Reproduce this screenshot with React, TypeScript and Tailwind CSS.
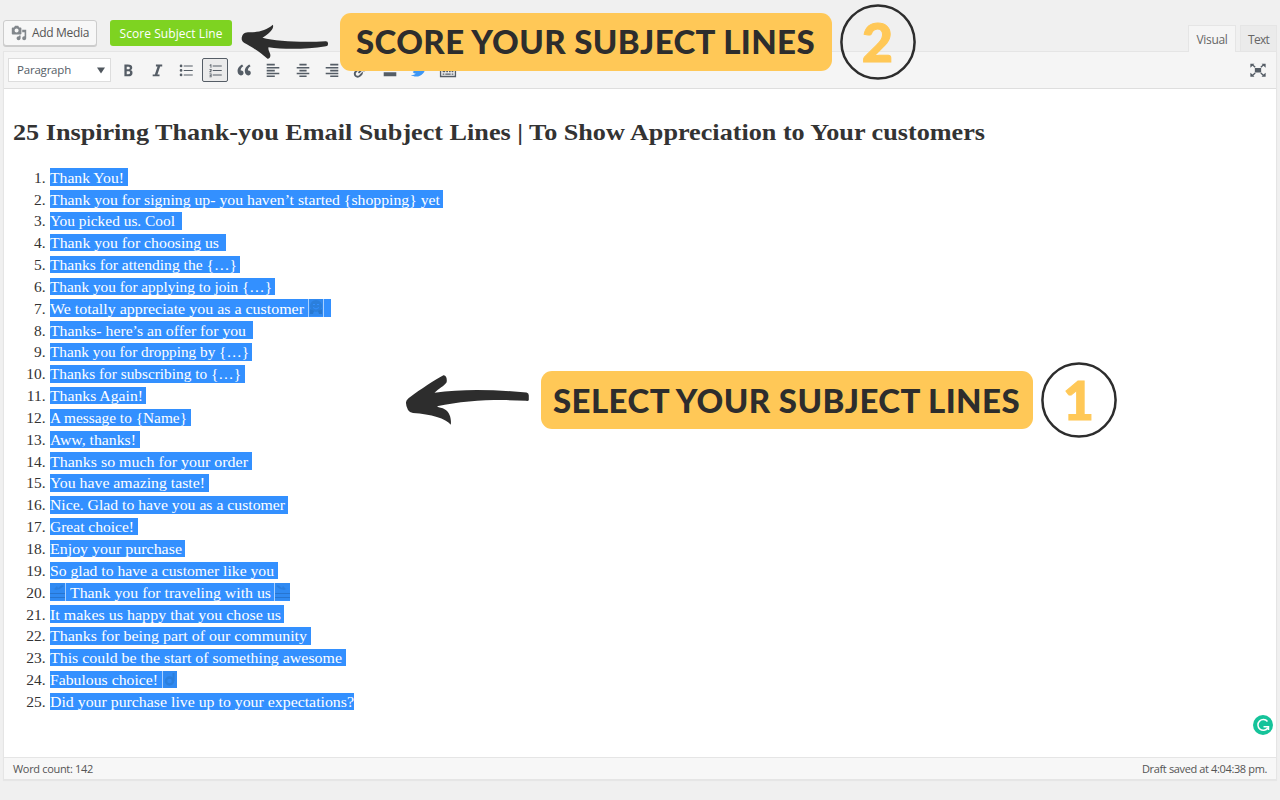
import { useLayoutEffect, useRef, type ReactNode } from "react";

/** Text that fills exactly `width` pixels, by tracking or by stretching its glyphs. */
function Fit({
  width,
  children,
  className = "",
  stretch = false,
}: {
  width: number;
  children: string;
  className?: string;
  stretch?: boolean;
}) {
  const ref = useRef<HTMLSpanElement>(null);
  useLayoutEffect(() => {
    const el = ref.current;
    if (!el) return;
    el.style.letterSpacing = "0px";
    el.style.transform = "none";
    el.style.width = "auto";
    const natural = el.getBoundingClientRect().width;
    if (stretch) {
      el.style.width = `${width}px`;
      el.style.transform = `scaleX(${width / natural})`;
    } else {
      el.style.letterSpacing = `${(width - natural) / children.length}px`;
    }
  }, [width, children, stretch]);
  return (
    <span ref={ref} className={`inline-block origin-left whitespace-pre ${className}`}>
      {children}
    </span>
  );
}

type Line = { text: string; w: number; hl: number; before?: ReactNode; after?: ReactNode };

const Hug = () => (
  <span className="flex h-full">
    <span className="ml-1 w-px bg-[#a9d0ff]" />
    <svg width="14" height="17" viewBox="0 0 14 17" className="bg-[#3089ef]">
      <circle cx="7" cy="7" r="6" fill="#2b7fdc" />
      <path d="M4 5.5h2M8 5.5h2M4 8.5q3 3 6 0" stroke="#3390ff" fill="none" />
      <path d="M1 10l4 2-1 3H1zM13 10l-4 2 1 3h3z" fill="#2878cf" />
    </svg>
    <span className="w-px bg-[#a9d0ff]" />
  </span>
);

const Plane = ({ flip = false }: { flip?: boolean }) => (
  <svg width="15" height="17" viewBox="0 0 15 17" className={flip ? "-scale-x-100" : ""}>
    <rect width="15" height="17" fill="#308af2" />
    <path d="M1 5l3 1 3-3 1 2 4-3 2 1-4 3-4 1z" fill="#2a7fe0" />
    <path d="M0 10.500h15M0 14.500h15" stroke="#2775d0" />
  </svg>
);

const Ok = () => (
  <span className="flex h-full">
    <span className="ml-1 w-px bg-[#a9d0ff]" />
    <svg width="14" height="17" viewBox="0 0 14 17">
      <rect width="14" height="17" fill="#308af2" />
      <circle cx="6.500" cy="10" r="3.500" fill="none" stroke="#2b7fdc" strokeWidth="2.500" />
      <path d="M10.500 2v8" stroke="#2b7fdc" strokeWidth="2" />
    </svg>
  </span>
);

const lines: Line[] = [
  { text: "Thank You!", w: 74, hl: 78 },
  { text: "Thank you for signing up- you haven’t started {shopping} yet", w: 390, hl: 393 },
  { text: "You picked us. Cool", w: 125, hl: 132 },
  { text: "Thank you for choosing us", w: 169, hl: 176 },
  { text: "Thanks for attending the {…}", w: 187, hl: 190 },
  { text: "Thank you for applying to join {…}", w: 222, hl: 225 },
  { text: "We totally appreciate you as a customer", w: 254, hl: 281, after: <Hug /> },
  { text: "Thanks- here’s an offer for you", w: 196, hl: 203 },
  { text: "Thank you for dropping by {…}", w: 199, hl: 202 },
  { text: "Thanks for subscribing to {…}", w: 191, hl: 195 },
  { text: "Thanks Again!", w: 93, hl: 96 },
  { text: "A message to {Name}", w: 137, hl: 141 },
  { text: "Aww, thanks!", w: 86, hl: 90 },
  { text: "Thanks so much for your order", w: 198, hl: 202 },
  { text: "You have amazing taste!", w: 155, hl: 159 },
  { text: "Nice. Glad to have you as a customer", w: 235, hl: 238 },
  { text: "Great choice!", w: 84, hl: 88 },
  { text: "Enjoy your purchase", w: 132, hl: 135 },
  { text: "So glad to have a customer like you", w: 224, hl: 228 },
  {
    text: "Thank you for traveling with us",
    w: 201,
    hl: 240,
    before: (
      <span className="mr-1 flex h-full">
        <Plane />
        <span className="w-px bg-[#a9d0ff]" />
      </span>
    ),
    after: (
      <span className="ml-[3px] flex h-full">
        <span className="w-px bg-[#a9d0ff]" />
        <Plane flip />
      </span>
    ),
  },
  { text: "It makes us happy that you chose us", w: 231, hl: 234 },
  { text: "Thanks for being part of our community", w: 257, hl: 261 },
  { text: "This could be the start of something awesome", w: 292, hl: 296 },
  { text: "Fabulous choice!", w: 108, hl: 127, after: <Ok /> },
  { text: "Did your purchase live up to your expectations?", w: 304, hl: 304 },
];

const bold =
  "M6 4v13h4.54c1.37 0 2.46-.33 3.26-1 .8-.66 1.2-1.58 1.2-2.77 0-.84-.17-1.51-.51-2.01s-.9-.85-1.67-1.03v-.09c.57-.1 1.02-.4 1.36-.9s.51-1.13.51-1.91c0-1.14-.39-1.98-1.17-2.5C12.75 4.26 11.5 4 9.78 4H6zm2.57 5.15V6.26h1.36c.73 0 1.27.11 1.61.32.34.22.51.58.51 1.07 0 .54-.16.92-.47 1.15s-.82.35-1.51.35h-1.5zm0 2.19h1.6c1.44 0 2.16.53 2.16 1.61 0 .6-.17 1.05-.51 1.34s-.86.43-1.57.43H8.57v-3.38z";
const italic = "M8.800 4h7v2h-2.300l-3 9h2.300v2h-7.600v-2h2.400l3-9H8.800z";
const bullets =
  "M4.500 4a1.500 1.500 0 1 0 0 3 1.500 1.500 0 0 0 0-3zM4.500 9a1.500 1.500 0 1 0 0 3 1.500 1.500 0 0 0 0-3zM4.500 14a1.500 1.500 0 1 0 0 3 1.500 1.500 0 0 0 0-3zM7.500 5h10v1.200h-10zM7.500 10h10v1.200h-10zM7.500 15h10v1.200h-10z";
const numbers =
  "M4 4.500l1.200-.8h.8V7.500H5V5l-1 .4zM3.800 9h2.400v1.800l-1.200 1h1.200v.8H3.800v-1l1.400-1.200v-.6H3.800zM3.800 14h2.400v4H3.800v-.8h1.400v-.8H4v-.8h1.200v-.8H3.800zM7.500 5h10v1.200h-10zM7.500 10h10v1.200h-10zM7.500 15h10v1.200h-10z";
const quote =
  "M9.49 13.22c0-.74-.2-1.38-.61-1.9-.62-.78-1.83-.88-2.53-.72-.29-1.65 1.11-3.75 2.92-4.65L7.88 4c-2.73 1.3-5.42 4.28-4.96 8.05C3.21 14.43 4.59 16 6.54 16c.85 0 1.56-.25 2.12-.75s.83-1.18.83-2.03zm8.05 0c0-.74-.2-1.38-.61-1.9-.63-.78-1.83-.88-2.53-.72-.29-1.65 1.11-3.75 2.92-4.65L15.93 4c-2.73 1.3-5.41 4.28-4.95 8.05.29 2.38 1.66 3.95 3.61 3.95.85 0 1.56-.25 2.12-.75s.83-1.18.83-2.03z";
const left = "M3 3h9v2H3zM3 6.700h14v1.600H3zM3 9.800h9v2H3zM3 13h14v1.600H3zM3 16h9v1.800H3z";
const center = "M6 3h8v2H6zM3 6.700h14v1.600H3zM6 9.800h8v2H6zM3 13h14v1.600H3zM6 16h8v1.800H6z";
const right = "M8 3h9v2H8zM3 6.700h14v1.600H3zM8 9.800h9v2H8zM3 13h14v1.600H3zM8 16h9v1.800H8z";
const link =
  "M17.740 2.760c1.680 1.690 1.680 4.410 0 6.100l-1.530 1.520c-1.120 1.120-2.700 1.470-4.140 1.090l2.620-2.610.76-.77.76-.76c.84-.84.84-2.200 0-3.040-.84-.85-2.200-.85-3.040 0l-.77.76-3.380 3.380c-.37-1.440-.02-3.020 1.100-4.140l1.520-1.530c1.690-1.680 4.420-1.680 6.100 0zM8.590 13.430l5.340-5.340c.42-.42.42-1.100 0-1.520-.44-.43-1.130-.39-1.530 0l-5.330 5.340c-.42.42-.42 1.100 0 1.520.44.43 1.130.39 1.520 0zm-.76 2.290l4.140-4.150c.38 1.440.03 3.020-1.090 4.140l-1.520 1.530c-1.690 1.680-4.410 1.680-6.100 0-1.680-1.680-1.680-4.420 0-6.100l1.530-1.520c1.120-1.120 2.700-1.470 4.140-1.100l-4.140 4.150c-.85.84-.85 2.200 0 3.050.84.84 2.200.84 3.040 0z";
const more = "M3 4h14v4H3zM3 12.500h14v4.500H3z";
const bird =
  "M18.940 4.460c-.49.73-1.110 1.380-1.830 1.900.01.150.01.310.01.470 0 4.850-3.690 10.440-10.430 10.440-2.070 0-4-.61-5.630-1.650.29.030.58.050.88.050 1.720 0 3.300-.59 4.550-1.570-1.600-.03-2.950-1.090-3.420-2.550.22.040.45.070.69.070.33 0 .66-.05.960-.13-1.670-.34-2.940-1.820-2.940-3.600v-.04c.5.270 1.060.44 1.660.46-.98-.66-1.630-1.780-1.630-3.060 0-.67.18-1.300.5-1.840 1.810 2.220 4.510 3.680 7.560 3.830-.06-.27-.1-.55-.1-.84 0-2.020 1.650-3.660 3.670-3.660 1.060 0 2.010.44 2.680 1.160.83-.17 1.620-.47 2.330-.89-.28.85-.86 1.570-1.620 2.020.75-.08 1.450-.28 2.110-.57z";
const kitchen =
  "M1 3h18v15H1zM2.500 6v10.500h15V6zM4 8h2v1.600H4zM7 8h2v1.600H7zM10 8h2v1.600h-2zM13 8h3v1.600h-3zM4 11h3v1.600H4zM8 11h2v1.600H8zM11 11h2v1.600h-2zM14 11h2v1.600h-2zM4 14h2v1.400H4zM7 14h6v1.400H7zM14 14h2v1.400h-2z";
const media =
  "M13 11V4c0-.55-.45-1-1-1h-1.67L9 1H5L3.67 3H2c-.55 0-1 .45-1 1v7c0 .55.45 1 1 1h10c.55 0 1-.45 1-1zM7 4.500c1.380 0 2.500 1.120 2.500 2.500S8.380 9.500 7 9.500 4.500 8.380 4.500 7 5.620 4.500 7 4.500zM14 6h5v10.500c0 1.380-1.120 2.500-2.500 2.500S14 17.880 14 16.500s1.120-2.500 2.500-2.500c.17 0 .34.020.5.050V9h-3V6zm-4 8.050V13h2v3.500c0 1.380-1.120 2.500-2.500 2.500S7 17.880 7 16.500 8.120 14 9.500 14c.17 0 .34.020.5.050z";
const expand =
  "M1.500 3h4.500L4.900 4.300 7.400 6.500l-1 1.100-2.500-2.200L1.500 7.500zM18.500 3H14l1.100 1.300-2.500 2.200 1 1.100 2.500-2.200 2.400 2.100zM1.500 17.500H6l-1.100-1.300L7.400 14l-1-1.100-2.500 2.200L1.500 13zM18.500 17.500H14l1.100-1.300-2.500-2.200 1-1.100 2.500 2.200 2.400-2.100zM6.500 7.800h7v5h-7z";

const Icon = ({ d, size = 18 }: { d: string; size?: number }) => (
  <svg width={size} height={size} viewBox="0 0 20 20" fill="currentColor" fillRule="evenodd" className="shrink-0">
    <path d={d} />
  </svg>
);

const tools = [
  { id: "bold", d: bold },
  { id: "italic", d: italic },
  { id: "bullets", d: bullets },
  { id: "numbers", d: numbers, active: true },
  { id: "quote", d: quote },
  { id: "left", d: left },
  { id: "center", d: center },
  { id: "right", d: right },
  { id: "link", d: link },
  { id: "more", d: more },
  { id: "bird", d: bird, blue: true },
  { id: "kitchen", d: kitchen },
];

const Callout = ({ text, width, n }: { text: string; width: number; n: string }) => (
  <div className="flex items-center font-['Lato',sans-serif] font-black">
    <div className="flex h-[58px] w-[492px] items-center justify-center rounded-[11px] bg-[#ffc857] text-[33px] leading-none text-[#2d2d2d]">
      <Fit width={width}>{text}</Fit>
    </div>
    <div className="relative ml-[8px] flex h-[76px] w-[76px] items-center justify-center text-[54px] leading-none text-[#ffc857] [-webkit-text-stroke:1px_#ffc857]">
      <svg className="absolute inset-0" width="76" height="76" viewBox="0 0 76 76">
        <circle cx="38" cy="38" r="36.600" fill="none" stroke="#2d2d2d" strokeWidth="2.500" />
      </svg>
      <span>{n}</span>
    </div>
  </div>
);

export default function App() {
  return (
    <div className="relative flex h-[800px] w-[1280px] flex-col overflow-hidden bg-[#f0f0f0] px-[3px] font-['Open_Sans',sans-serif] text-[12px] text-[#555]">
      <header className="flex h-[51px] shrink-0 items-end justify-between">
        <div className="flex gap-[13px] pb-[5px]">
          <button className="flex h-[26px] w-[94px] items-center gap-[5px] rounded-[3px] border border-[#ccc] bg-[#f7f7f7] pl-[7px] shadow-[0_1px_0_#ccc]">
            <span className="text-[#82878c]">
              <Icon d={media} size={16} />
            </span>
            <Fit width={57}>Add Media</Fit>
          </button>
          <button className="flex h-[26px] w-[122px] items-center justify-center rounded-[3px] bg-[#7ed321] pt-px text-white">
            <Fit width={103}>Score Subject Line</Fit>
          </button>
        </div>
        <div className="flex items-end gap-1 text-[#666]">
          <div className="relative z-10 -mb-px flex h-[27px] w-[48px] items-center justify-center border border-b-0 border-[#e5e5e5] bg-[#f5f5f5] pt-px">
            <Fit width={31}>Visual</Fit>
          </div>
          <div className="flex h-[26px] w-[37px] items-center justify-center border border-b-0 border-[#e5e5e5] bg-[#ebebeb] pt-[2px]">
            <Fit width={21}>Text</Fit>
          </div>
        </div>
      </header>

      <main className="flex h-[729px] shrink-0 flex-col border border-[#e5e5e5] bg-white shadow-[0_1px_1px_rgba(0,0,0,0.04)]">
        <div className="flex h-[37px] shrink-0 items-center border-b border-[#dedede] bg-[#f5f5f5] px-[4px] text-[#555d66]">
          <div className="mr-[4px] flex h-[24px] w-[103px] items-center justify-between border border-[#ddd] bg-white pr-[5px] pl-[8px]">
            <Fit width={54} className="text-[11.500px]">Paragraph</Fit>
            <svg width="8" height="7" viewBox="0 0 8 7" fill="#50575e">
              <path d="M0 .5h8L4 6.500z" />
            </svg>
          </div>
          <div className="flex gap-[3.100px]">
            {tools.map((t) => (
              <span
                key={t.id}
                className={`flex h-[24px] w-[26px] items-center justify-center ${
                  t.active ? "rounded-[2px] border border-[#555d66] bg-[#ebebeb]" : ""
                } ${t.blue ? "text-[#3e97f5]" : ""}`}
              >
                <Icon d={t.d} />
              </span>
            ))}
          </div>
          <span className="mr-[5px] ml-auto">
            <Icon d={expand} />
          </span>
        </div>

        <article className="grow pl-[9px] font-['Liberation_Serif',serif] text-[#333]">
          <h1 className="mt-[29px] h-[28px] text-[23.500px] leading-[28px] font-bold">
            <Fit stretch width={972}>25 Inspiring Thank-you Email Subject Lines | To Show Appreciation to Your customers</Fit>
          </h1>
          <ol className="mt-[20.250px] text-[15.500px]">
            {lines.map((l, i) => (
              <li key={l.text} className="flex h-[21.850px] items-center leading-[17px]">
                <span className="mr-[4px] w-[32.600px] text-right">{i + 1}.</span>
                <span className="flex h-[17.500px] items-center bg-[#3390ff] text-white" style={{ width: l.hl }}>
                  {l.before}
                  <Fit stretch width={l.w}>{l.text}</Fit>
                  {l.after}
                </span>
              </li>
            ))}
          </ol>
        </article>

        <footer className="flex h-[22px] shrink-0 items-center justify-between border-t border-[#e5e5e5] bg-[#f7f7f7] px-[9px] pt-[2px] text-[11px]">
          <Fit width={80}>Word count: 142</Fit>
          <Fit width={125}>Draft saved at 4:04:38 pm.</Fit>
        </footer>
      </main>

      <div className="absolute top-[3.500px] left-[339.500px] z-20">
        <Callout text="SCORE YOUR SUBJECT LINES" width={459} n="2" />
      </div>
      <div className="absolute top-[362px] left-[540.500px] z-20">
        <Callout text="SELECT YOUR SUBJECT LINES" width={467} n="1" />
      </div>
      <svg className="absolute top-[20px] left-[236px] z-20" width="96" height="44" viewBox="236 20 96 44" fill="#2d2d2d">
        <path d="M241.700 39.500C241.500 35 244 32.500 248 32.300C257 32.500 266 31 272.800 24.800C274.500 28 270 33.500 262.500 37.800C276 41.500 304 42.500 325.500 41.200Q328.200 41 328 43.500Q328.200 46 326 46.200C305 49.500 284 49.500 268.500 47.200C268 49 269 51 270 53.500C271 56 270 59 267.500 58.800C260 52 251 46.500 244 42.800Q242 41.500 241.700 39.500Z" />
      </svg>
      <svg className="absolute top-[370px] left-[400px] z-20" width="134" height="60" viewBox="400 370 134 60" fill="#2d2d2d">
        <path d="M406 402.500C406.200 400 408 398.500 410.500 396.700C421 389 434 380.500 443 375.500C446 374.500 447.500 379 446.500 382.500C444 386 439 388.500 434.500 392.700C463 388.500 496 389.500 526.500 392.600Q529 393 528.800 396V399.500Q529 401.200 526 400.800C496 399 465 400.500 437 406.300C439 408 442 407.500 445 409.500C450 412.500 451.500 419 450.800 424.800C446 418.500 431 414 413 413Q410 413 408 410Q405.800 406 406 402.500Z" />
      </svg>
      <svg className="absolute top-[715px] left-[1253px] z-20" width="20" height="20" viewBox="0 0 20 20">
        <circle cx="10" cy="10" r="10" fill="#15c39a" />
        <path d="M14.500 6.500A5.400 5.400 0 1 0 14.800 13M10.500 11.700h5v3.200" fill="none" stroke="white" strokeWidth="1.500" />
      </svg>
    </div>
  );
}
